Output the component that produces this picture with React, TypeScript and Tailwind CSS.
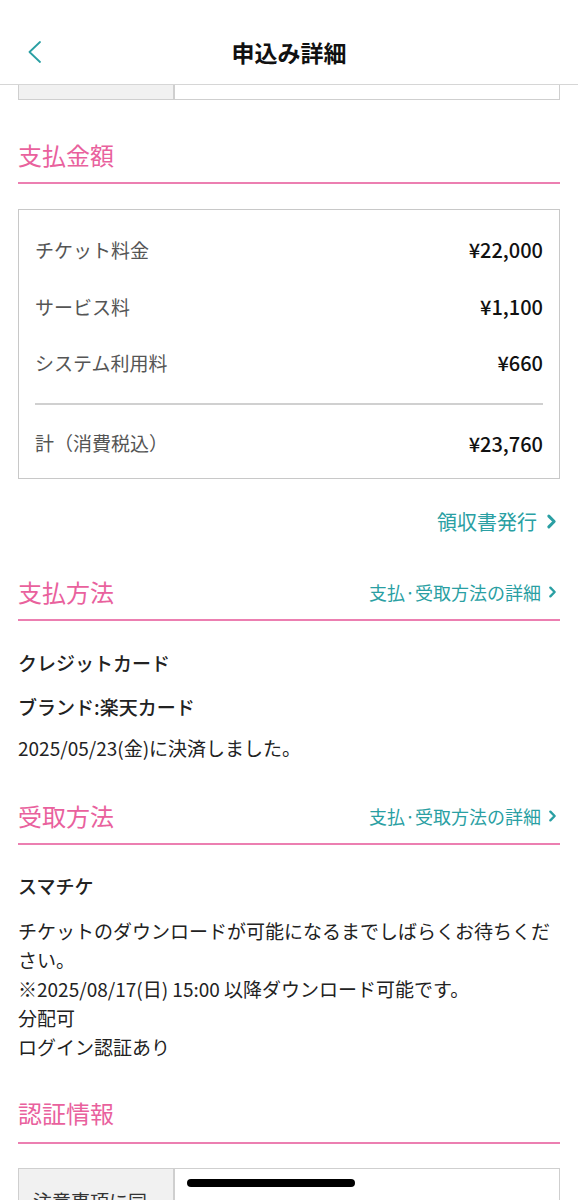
import React from 'react';

const FONT = { fontFamily: '"Noto Sans CJK JP", "Noto Sans", sans-serif' };

const Chevron = ({ className = '' }: { className?: string }) => (
  <svg viewBox="0 0 10 14" className={className} fill="none">
    <polyline points="2.5,2 7.5,7 2.5,12" stroke="currentColor" strokeWidth="2.8" strokeLinecap="round" strokeLinejoin="round" />
  </svg>
);

const SectionTitle = ({
  title,
  link,
  className = '',
  pad = 'pb-[9px]',
}: {
  title: string;
  link?: boolean;
  className?: string;
  pad?: string;
}) => (
  <div className={`flex items-center justify-between border-b-2 border-[#ec7fb1] ${pad} ${className}`}>
    <h2 className="text-[24px] leading-[36px] text-[#e9619d]">{title}</h2>
    {link && (
      <a className="flex items-center gap-[7px] pr-[3px] text-[18px] leading-[26px] text-[#2a9fa3]">
        <span>支払·受取方法の詳細</span>
        <Chevron className="h-[12px] w-[9px]" />
      </a>
    )}
  </div>
);

const fees = [
  { label: 'チケット料金', value: '¥22,000' },
  { label: 'サービス料', value: '¥1,100' },
  { label: 'システム利用料', value: '¥660' },
];

export default function App() {
  return (
    <div className="h-[1200px] w-[578px] overflow-hidden bg-white text-[#222]" style={FONT}>
      {/* ヘッダー */}
      <header className="grid h-[85px] grid-cols-[1fr_auto_1fr] items-center border-b border-[#d6d6d6] pt-[20px]">
        <div className="pl-[28px]">
          <svg viewBox="0 0 13 22" className="h-[22px] w-[13px] text-[#2a9fa3]" fill="none">
            <polyline points="12,1 1.5,11 12,21" stroke="currentColor" strokeWidth="1.8" strokeLinecap="round" strokeLinejoin="round" />
          </svg>
        </div>
        <h1 className="text-[23px] font-bold leading-[30px] text-[#111]">申込み詳細</h1>
        <div />
      </header>

      <div className="px-[18px]">
        {/* 上の表の末尾 */}
        <div className="flex h-[15px] border-x border-b border-[#cfcfcf]">
          <div className="w-[156px] border-r-2 border-[#cfcfcf] bg-[#f1f1f1]" />
          <div className="flex-1" />
        </div>

        <SectionTitle title="支払金額" className="mt-[37px]" />

        <div className="mt-[25px] border border-[#c8c8c8] px-[16px] pb-[6px] pt-[12px]">
          {fees.map((f) => (
            <div key={f.label} className="flex h-[56.5px] items-center justify-between">
              <span className="text-[19px] text-[#555]">{f.label}</span>
              <span className="text-[20px] font-medium text-[#111]">{f.value}</span>
            </div>
          ))}
          <div className="my-[11px] border-t-2 border-[#d0d0d0]" />
          <div className="flex h-[56px] items-center justify-between">
            <span className="text-[19px] text-[#555]">計（消費税込）</span>
            <span className="text-[20px] font-medium text-[#111]">¥23,760</span>
          </div>
        </div>

        <div className="mt-[29px] flex justify-end pr-[3px]">
          <a className="flex items-center gap-[9px] text-[20px] leading-[28px] text-[#2a9fa3]">
            <span>領収書発行</span>
            <Chevron className="h-[15px] w-[11px]" />
          </a>
        </div>

        <SectionTitle title="支払方法" link className="mt-[38px]" />

        <div className="mt-[28px] text-[19px] leading-[28px]">
          <p className="font-medium">クレジットカード</p>
          <p className="mt-[16px] font-medium">ブランド:楽天カード</p>
          <p className="mt-[13px]">2025/05/23(金)に決済しました。</p>
        </div>

        <SectionTitle title="受取方法" link className="mt-[36px]" />

        <div className="mt-[27px] text-[19px]">
          <p className="font-medium leading-[28px]">スマチケ</p>
          <p className="mt-[16px] leading-[29px]">
            チケットのダウンロードが可能になるまでしばらくお待ちください。
            <br />
            ※2025/08/17(日) 15:00 以降ダウンロード可能です。
            <br />
            分配可
            <br />
            ログイン認証あり
          </p>
        </div>

        <SectionTitle title="認証情報" className="mt-[34px]" pad="pb-[11px]" />

        <div className="mt-[24px] flex h-[80px] border border-[#cfcfcf]">
          <div className="w-[156px] border-r-2 border-[#cfcfcf] bg-[#f1f1f1] px-[14px] pt-[18px] text-[19px] leading-[28px] text-[#333]">
            注意事項に同意
          </div>
          <div className="flex-1 pl-[12px] pt-[10px]">
            <div className="h-[8px] w-[168px] rounded-full bg-black" />
          </div>
        </div>
      </div>
    </div>
  );
}
